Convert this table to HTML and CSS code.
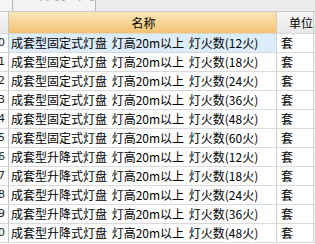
FILE: index.html
```html
<!DOCTYPE html>
<html>
<head>
<meta charset="utf-8">
<link rel="stylesheet" href="styles.css">
</head>
<body>
<div class="tabs">
  <div class="tab-left"></div>
  <div class="tab"><span class="tab-text">工料机 单价</span></div>
  <div class="tab-rest"></div>
</div>
<div class="grid">
  <div class="row head">
    <div class="c num h-grey"></div>
    <div class="c name h-orange">名称</div>
    <div class="c unit h-grey">单位</div>
    <div class="c extra h-grey"></div>
  </div>
  <div class="row sel">
    <div class="c num"><span>10</span></div>
    <div class="c name">成套型固定式灯盘 灯高20m以上 灯火数(12火)</div>
    <div class="c unit">套</div>
    <div class="c extra"></div>
  </div>
  <div class="row">
    <div class="c num"><span>11</span></div>
    <div class="c name">成套型固定式灯盘 灯高20m以上 灯火数(18火)</div>
    <div class="c unit">套</div>
    <div class="c extra"></div>
  </div>
  <div class="row">
    <div class="c num"><span>12</span></div>
    <div class="c name">成套型固定式灯盘 灯高20m以上 灯火数(24火)</div>
    <div class="c unit">套</div>
    <div class="c extra"></div>
  </div>
  <div class="row">
    <div class="c num"><span>13</span></div>
    <div class="c name">成套型固定式灯盘 灯高20m以上 灯火数(36火)</div>
    <div class="c unit">套</div>
    <div class="c extra"></div>
  </div>
  <div class="row">
    <div class="c num"><span>14</span></div>
    <div class="c name">成套型固定式灯盘 灯高20m以上 灯火数(48火)</div>
    <div class="c unit">套</div>
    <div class="c extra"></div>
  </div>
  <div class="row">
    <div class="c num"><span>15</span></div>
    <div class="c name">成套型固定式灯盘 灯高20m以上 灯火数(60火)</div>
    <div class="c unit">套</div>
    <div class="c extra"></div>
  </div>
  <div class="row">
    <div class="c num"><span>16</span></div>
    <div class="c name">成套型升降式灯盘 灯高20m以上 灯火数(12火)</div>
    <div class="c unit">套</div>
    <div class="c extra"></div>
  </div>
  <div class="row">
    <div class="c num"><span>17</span></div>
    <div class="c name">成套型升降式灯盘 灯高20m以上 灯火数(18火)</div>
    <div class="c unit">套</div>
    <div class="c extra"></div>
  </div>
  <div class="row">
    <div class="c num"><span>18</span></div>
    <div class="c name">成套型升降式灯盘 灯高20m以上 灯火数(24火)</div>
    <div class="c unit">套</div>
    <div class="c extra"></div>
  </div>
  <div class="row">
    <div class="c num"><span>19</span></div>
    <div class="c name">成套型升降式灯盘 灯高20m以上 灯火数(36火)</div>
    <div class="c unit">套</div>
    <div class="c extra"></div>
  </div>
  <div class="row">
    <div class="c num"><span>20</span></div>
    <div class="c name">成套型升降式灯盘 灯高20m以上 灯火数(48火)</div>
    <div class="c unit">套</div>
    <div class="c extra"></div>
  </div>
</div>
</body>
</html>
```
FILE: styles.css
```css
html, body {
  margin: 0;
  padding: 0;
  background: #ffffff;
  overflow: hidden;
}
body {
  font-family: "Noto Sans CJK SC", "DejaVu Sans", sans-serif;
  font-size: 12px;
  color: #000;
  width: 315px;
  height: 244px;
}
.tabs {
  display: flex;
  height: 11px;
  border-bottom: 1px solid #c8c8c8;
  background: #ececec;
}
.tab-left {
  width: 12px;
  background: #f5f5f5;
  border-right: 1px solid #b4b4b4;
}
.tab {
  width: 82px;
  background: #f3f3f3;
  border-right: 1px solid #b4b4b4;
  overflow: hidden;
}
.tab-text {
  display: block;
  white-space: nowrap;
  margin-top: -12px;
  padding-left: 10px;
  color: #8a8a8a;
  font-size: 12px;
  letter-spacing: 3px;
  line-height: 14px;
}
.tab-rest {
  flex: 1;
  background: #ececec;
}
.grid {
  display: flex;
  flex-direction: column;
}
.row {
  display: grid;
  grid-template-columns: 9px 268px 37px 1fr;
  height: 19px;
}
.c {
  border-right: 1px solid #d0d0d0;
  border-bottom: 1px solid #dadada;
  line-height: 18px;
  white-space: nowrap;
  overflow: hidden;
  min-width: 0;
}
.num {
  display: flex;
  justify-content: flex-end;
  padding-right: 3px;
  font-family: "DejaVu Sans", sans-serif;
  font-size: 11px;
  color: #222;
  background: #ffffff;
  border-right-color: #c4c4c4;
}
.num span {
  flex: none;
}
.name {
  padding-left: 2px;
  word-spacing: 2px;
}
.unit {
  padding-left: 4px;
}
.head {
  height: 22px;
}
.head .c {
  line-height: 21px;
  border-bottom: 1px solid #d8d8d8;
}
.h-orange {
  background: linear-gradient(#fbe5b9, #f8d79b 45%, #f2c170);
  text-align: center;
  border-right-color: #e0c89a;
}
.h-grey {
  background: linear-gradient(#f6f6f6, #e9e9e9);
}
.head .unit {
  text-align: right;
  padding-right: 0;
}
.sel .name {
  background: #dcecfb;
}
.extra {
  border-right: none;
}
```
